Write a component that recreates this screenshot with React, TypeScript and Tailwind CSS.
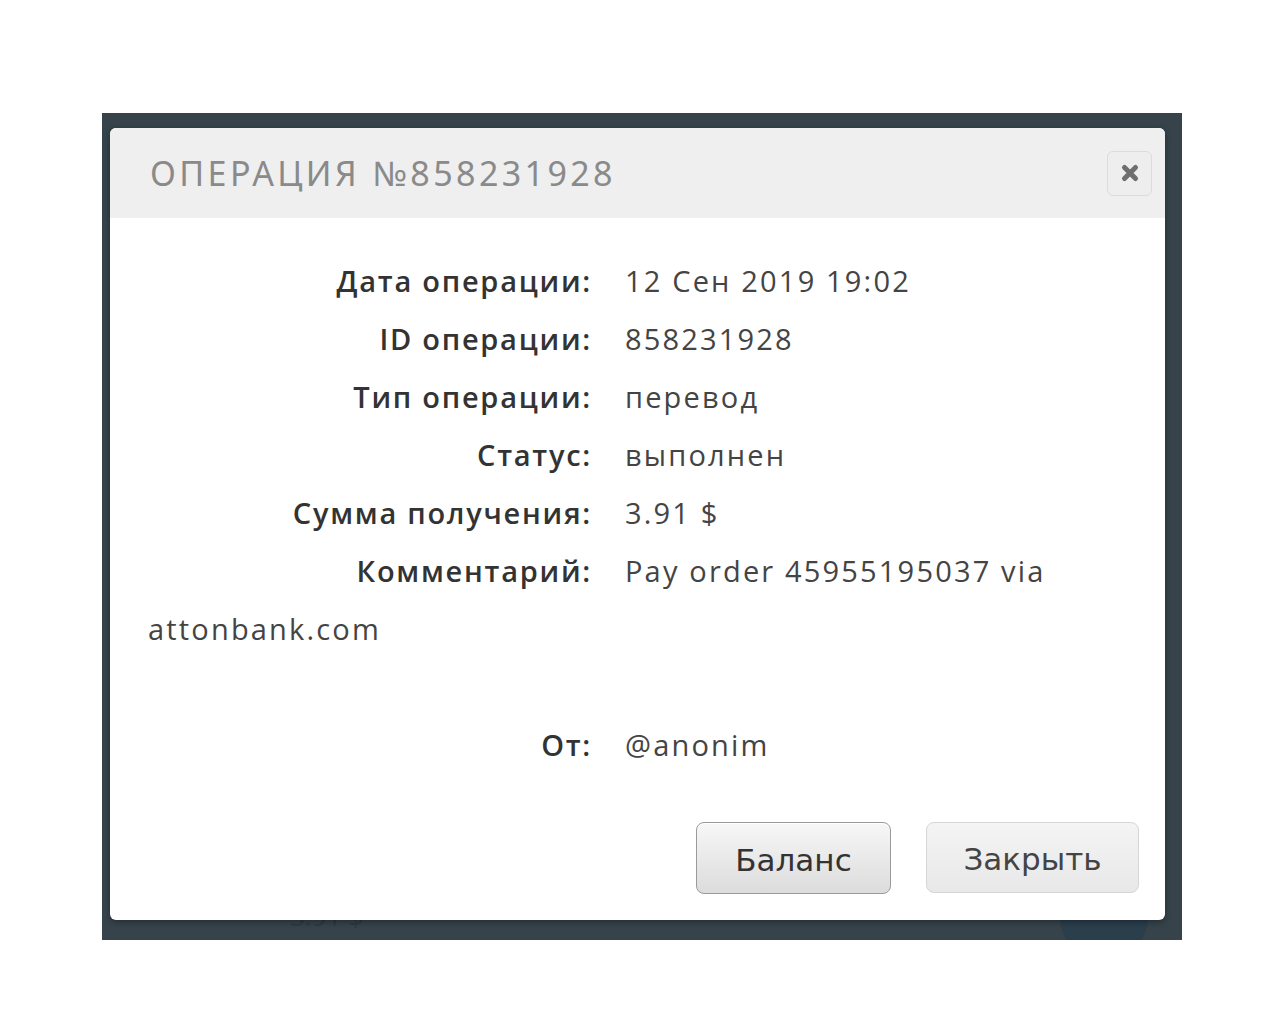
import React from 'react';

const rows: { label: string; value: string }[] = [
  { label: 'Дата операции:', value: '12 Сен 2019 19:02' },
  { label: 'ID операции:', value: '858231928' },
  { label: 'Тип операции:', value: 'перевод' },
  { label: 'Статус:', value: 'выполнен' },
  { label: 'Сумма получения:', value: '3.91 $' },
  { label: 'Комментарий:', value: 'Pay order 45955195037 via' },
];

const Row = ({ label, value }: { label: string; value: string }) => (
  <div className="flex">
    <span className="w-[444px] mr-[33px] text-right font-semibold text-[#333] tracking-[0.06em]">{label}</span>
    <span className="tracking-[0.075em]">{value}</span>
  </div>
);

export default function App() {
  return (
    <div className="w-full h-[1024px] bg-white pt-[113px] pl-[102px]">
      {/* dimmed page behind the modal */}
      <div className="relative w-[1080px] h-[827px] bg-[#36434b] pt-[15px] pl-[8px] overflow-hidden">
        <div className="absolute left-[188px] top-[788px] text-[26px] leading-[30px] text-[#2d3940] font-['Open_Sans',sans-serif]">
          3.91 $
        </div>
        <div className="absolute left-[958px] top-[760px] w-[88px] h-[88px] rounded-full bg-[#2b3e4c]" />

        <div className="relative w-[1055px] h-[792px] bg-white rounded-[6px] shadow-[0_2px_6px_rgba(0,0,0,0.35)] overflow-hidden">
          <div className="h-[90px] bg-[#efefef] flex items-center justify-between pl-[40px] pr-[13px]">
            <h2 className="text-[34px] font-normal tracking-[0.1em] text-[#8a8a8a] font-['Noto_Sans',sans-serif] leading-none">
              ОПЕРАЦИЯ №858231928
            </h2>
            <button className="w-[45px] h-[45px] rounded-[6px] border border-[#dcdcdc] bg-[#eeeeee] flex items-center justify-center">
              <svg width="20" height="20" viewBox="0 0 20 20">
                <path d="M4.5 4.5 L15.5 15.5 M15.5 4.5 L4.5 15.5" stroke="#6f6f6f" strokeWidth="5" strokeLinecap="round" />
              </svg>
            </button>
          </div>

          <div className="pt-[34px] px-[38px] text-[29px] leading-[58px] text-[#444] font-['Open_Sans',sans-serif]">
            {rows.map((r) => (
              <Row key={r.label} label={r.label} value={r.value} />
            ))}
            <div className="tracking-[0.075em]">attonbank.com</div>
            <div>&nbsp;</div>
            <Row label="От:" value="@anonim" />
          </div>

          <div className="flex justify-end gap-[35px] pr-[26px] mt-[48px] font-['DejaVu_Sans',sans-serif] text-[31px] text-[#333]">
            <button className="w-[195px] h-[72px] rounded-[8px] border border-[#9a9a9a] bg-gradient-to-b from-[#f7f7f7] to-[#dcdcdc] shadow-[inset_0_1px_0_#fff] pt-[4px]">
              Баланс
            </button>
            <button className="w-[213px] h-[71px] rounded-[8px] border border-[#d6d6d6] bg-gradient-to-b from-[#f4f4f4] to-[#e8e8e8] text-[#444] pt-[4px]">
              Закрыть
            </button>
          </div>
        </div>
      </div>
    </div>
  );
}
